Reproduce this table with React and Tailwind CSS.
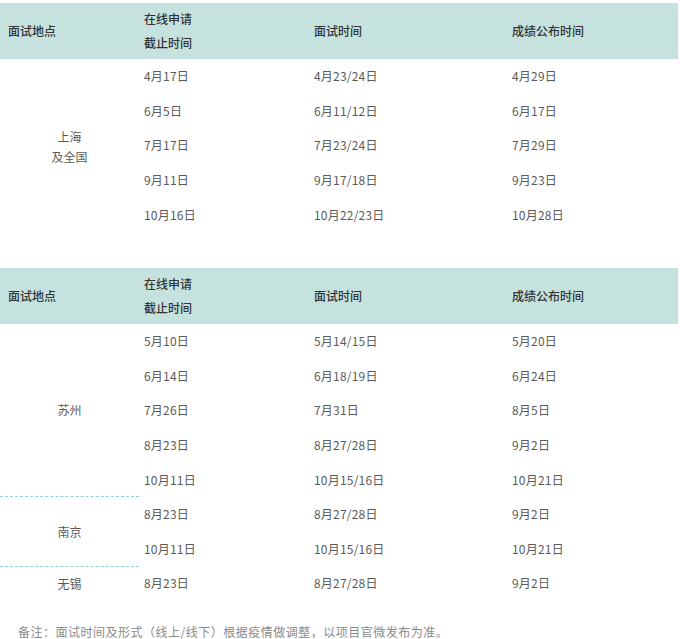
import React from "react";

const shanghai = [
  ["4月17日", "4月23/24日", "4月29日"],
  ["6月5日", "6月11/12日", "6月17日"],
  ["7月17日", "7月23/24日", "7月29日"],
  ["9月11日", "9月17/18日", "9月23日"],
  ["10月16日", "10月22/23日", "10月28日"],
];

const others = [
  {
    place: "苏州",
    rows: [
      ["5月10日", "5月14/15日", "5月20日"],
      ["6月14日", "6月18/19日", "6月24日"],
      ["7月26日", "7月31日", "8月5日"],
      ["8月23日", "8月27/28日", "9月2日"],
      ["10月11日", "10月15/16日", "10月21日"],
    ],
  },
  {
    place: "南京",
    rows: [
      ["8月23日", "8月27/28日", "9月2日"],
      ["10月11日", "10月15/16日", "10月21日"],
    ],
  },
  {
    place: "无锡",
    rows: [["8月23日", "8月27/28日", "9月2日"]],
  },
];

function Head() {
  return (
    <thead>
      <tr className="h-[56px] bg-[#c5e2de] text-[#333] font-medium">
        <th className="w-[139px] pl-2 text-left font-medium">面试地点</th>
        <th className="w-[170px] pl-[5px] text-left font-medium leading-[24px]">
          在线申请
          <br />
          截止时间
        </th>
        <th className="w-[198px] pl-[5px] text-left font-medium">面试时间</th>
        <th className="pl-[5px] text-left font-medium">成绩公布时间</th>
      </tr>
    </thead>
  );
}

function Cells({ row }) {
  return row.map((c, i) => (
    <td key={i} className="pl-[5px] text-left tracking-[0.2px]">
      {c}
    </td>
  ));
}

export default function App() {
  return (
    <div
      className="w-[680px] bg-white pt-[3px] text-[12px] text-[#5a5a5a]"
      style={{ fontFamily: '"Noto Sans CJK SC", "Noto Sans", sans-serif' }}
    >
      <table className="w-[678px] table-fixed border-collapse">
        <Head />
        <tbody>
          {shanghai.map((row, i) => (
            <tr key={i} className="h-[34.6px]">
              {i === 0 && (
                <td rowSpan={5} className="pt-1 text-center leading-[20px]">
                  上海
                  <br />
                  及全国
                </td>
              )}
              <Cells row={row} />
            </tr>
          ))}
        </tbody>
      </table>

      <div className="h-[36px]" />

      <table className="w-[678px] table-fixed border-collapse">
        <Head />
        <tbody>
          {others.map((g, gi) =>
            g.rows.map((row, i) => (
              <tr key={gi + "-" + i} className="h-[34.6px]">
                {i === 0 && (
                  <td
                    rowSpan={g.rows.length}
                    className={
                      gi < others.length - 1
                        ? "text-center border-b border-dashed border-[#8fd3cd]"
                        : "text-center"
                    }
                  >
                    {g.place}
                  </td>
                )}
                <Cells row={row} />
              </tr>
            ))
          )}
        </tbody>
      </table>

      <p className="pl-[18px] pt-[22px] pb-[3px] text-[12px] tracking-[0.5px] text-[#8a8a8a]">
        备注：面试时间及形式（线上/线下）根据疫情做调整，以项目官微发布为准。
      </p>
    </div>
  );
}
